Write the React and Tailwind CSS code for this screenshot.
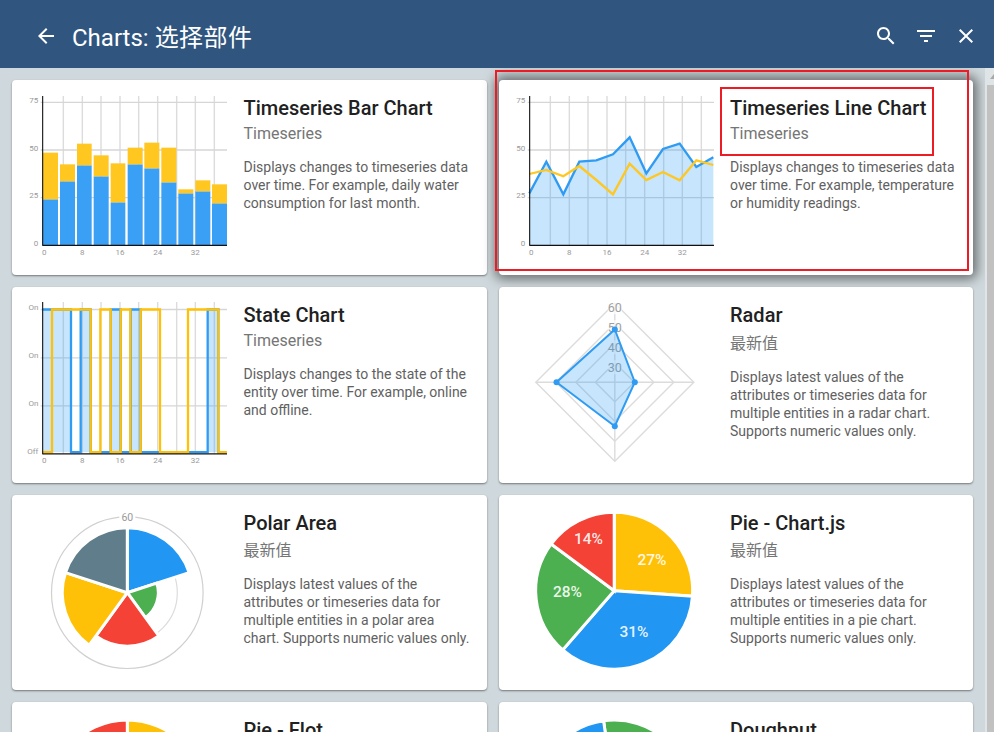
import React from "react";

const BLUE = "#2196f3";
const YELLOW = "#ffc107";
const GREEN = "#4caf50";
const RED = "#f44336";
const SLATE = "#607d8b";
const TICK = "#999999";
const FONT = "Roboto, 'Noto Sans CJK SC', sans-serif";

const VX = [190, 247, 303, 360, 416, 473, 530, 586, 643];
const xb = (z) => z / 3 - 12;
const yb = (z) => z / 3 - 80;

function Axes({ labels, hs, bottom, top }) {
  return (
    <g fontFamily={FONT} fontSize="8" fill={TICK}>
      {VX.map((z) => (
        <line key={z} x1={xb(z)} x2={xb(z)} y1={top} y2={bottom} stroke="#dcdcdc" strokeWidth="1.4" />
      ))}
      {hs.map((y) => (
        <line key={y} x1={xb(122)} x2={xb(681)} y1={y} y2={y} stroke="#d6d6d6" strokeWidth="1.3" />
      ))}
      {labels.map(([t, y]) => (
        <text key={t + y} x={xb(115)} y={y + 2.5} textAnchor="end">
          {t}
        </text>
      ))}
      {[["0", 133], ["8", 247], ["16", 360], ["24", 473], ["32", 586]].map(([t, z]) => (
        <text key={t} x={xb(z)} y={bottom + 9.5} textAnchor="middle">
          {t}
        </text>
      ))}
    </g>
  );
}

function Frame({ bottom, top }) {
  return (
    <g stroke="#111" strokeWidth="1.1">
      <line x1={xb(128)} x2={xb(128)} y1={top} y2={bottom + 0.5} />
      <line x1={xb(128)} x2={xb(681)} y1={bottom} y2={bottom} />
    </g>
  );
}

const Svg = ({ children }) => (
  <svg width="231" height="195" viewBox="0 0 231 195" className="block shrink-0">
    {children}
  </svg>
);

function BarChart() {
  const xs = [[128, 174], [180, 225], [231, 275], [281, 326], [332, 376], [383, 428], [433, 478], [484, 529], [535, 580], [586, 631], [636, 681]];
  const blue = [598, 544, 496, 529, 607, 493, 505, 547, 580, 574, 610];
  const yellow = [458, 493, 431, 466, 490, 443, 428, 443, 568, 541, 553];
  const bottom = yb(736);
  return (
    <Svg>
      <Axes top={16} bottom={bottom} hs={[yb(307), yb(450), yb(593)]} labels={[["75", 20], ["50", 68], ["25", 115.5], ["0", 163]]} />
      {xs.map(([a, b], i) => (
        <g key={a}>
          <rect x={xb(a)} width={(b - a) / 3} y={yb(blue[i])} height={bottom - yb(blue[i])} fill="#39a0f5" />
          <rect x={xb(a)} width={(b - a) / 3} y={yb(yellow[i])} height={yb(blue[i]) - yb(yellow[i])} fill="#ffc720" />
        </g>
      ))}
      <Frame top={16} bottom={bottom} />
    </Svg>
  );
}

function LineChart() {
  const shift = (z) => z + 30;
  const b = [[97, 580], [148, 485], [199, 583], [247, 485], [298, 481], [348, 463], [398, 412], [448, 520], [498, 447], [548, 431], [598, 501], [649, 472]];
  const y = [[97, 522], [148, 510], [199, 529], [247, 498], [298, 540], [348, 583], [398, 491], [448, 540], [498, 516], [548, 541], [598, 481], [649, 495]];
  const bottom = yb(736);
  const pts = (arr) => arr.map(([a, c]) => `${xb(shift(a))},${yb(c)}`).join(" ");
  return (
    <Svg>
      <Axes top={16} bottom={bottom} hs={[yb(307), yb(450), yb(593)]} labels={[["75", 20], ["50", 68], ["25", 115.5], ["0", 163]]} />
      <polygon points={`${xb(128)},${bottom} ${pts(b)} ${xb(679)},${bottom}`} fill={BLUE} fillOpacity="0.25" />
      <polyline points={pts(b)} fill="none" stroke="#2f9bf2" strokeWidth="2.3" />
      <polyline points={pts(y)} fill="none" stroke="#ffc720" strokeWidth="2.3" />
      <Frame top={16} bottom={bottom} />
    </Svg>
  );
}

function StateChart() {
  const yOf = (z) => (z + 855) / 3 - 286.5;
  const on = yOf(72);
  const off = yOf(500);
  const blue = [[128, 213], [242, 272], [332, 362], [392, 422], [623, 655]];
  const yellow = [[156, 272], [301, 332], [362, 391], [422, 480], [564, 655]];
  const path = (segs) => {
    let d = "";
    let last = 128;
    segs.forEach(([a, e], i) => {
      if (i === 0 && a === 128) d += `M${xb(a)} ${on}`;
      else {
        d += `${i === 0 ? "M" : "L"}${xb(last)} ${off}L${xb(a)} ${off}L${xb(a)} ${on}`;
      }
      d += `L${xb(e)} ${on}L${xb(e)} ${off}`;
      last = e;
    });
    return d + `L${xb(681)} ${off}`;
  };
  const bottom = yOf(505);
  return (
    <Svg>
      <Axes top={15} bottom={bottom} hs={[on, yOf(217), yOf(361)]} labels={[["On", yOf(67)], ["On", yOf(211)], ["On", yOf(355)], ["Off", yOf(498)]]} />
      {blue.map(([a, e]) => (
        <rect key={a} x={xb(a)} width={(e - a) / 3} y={on} height={off - on} fill={BLUE} fillOpacity="0.25" />
      ))}
      <path d={path(blue)} fill="none" stroke="#2f9bf2" strokeWidth="2.3" />
      <path d={path(yellow)} fill="none" stroke={YELLOW} strokeWidth="2.3" />
      <Frame top={15} bottom={bottom} />
    </Svg>
  );
}

function RadarChart() {
  const cx = 115.8;
  const cy = 95.2;
  const diamond = (r) => `${cx},${cy - r} ${cx + r},${cy} ${cx},${cy + r} ${cx - r},${cy}`;
  const p = [[cx, cy - 52.7], [cx + 20, cy], [cx, cy + 44], [cx - 58.3, cy]];
  const str = p.map((a) => a.join(",")).join(" ");
  return (
    <Svg>
      {[79, 59, 39, 19.5].map((r) => (
        <polygon key={r} points={diamond(r)} fill="none" stroke="#dcdcdc" strokeWidth="1.4" />
      ))}
      <line x1={cx} x2={cx} y1={cy - 79} y2={cy + 79} stroke="#dcdcdc" strokeWidth="1.4" />
      <line x1={cx - 79} x2={cx + 79} y1={cy} y2={cy} stroke="#dcdcdc" strokeWidth="1.4" />
      {[["60", 75], ["50", 55], ["40", 35], ["30", 15]].map(([t, d]) => (
        <g key={t}>
          <rect x={cx - 7} y={cy - d - 7} width="14" height="14" fill="#fff" fillOpacity="0.7" />
          <text x={cx} y={cy - d + 4.5} textAnchor="middle" fontFamily={FONT} fontSize="12.5" fill="#9e9e9e">
            {t}
          </text>
        </g>
      ))}
      <polygon points={str} fill={BLUE} fillOpacity="0.25" stroke="#2f9bf2" strokeWidth="2" />
      {p.map(([x, y]) => (
        <circle key={x + "-" + y} cx={x} cy={y} r="3" fill="#2f9bf2" />
      ))}
    </Svg>
  );
}

function sector(cx, cy, r, a0, a1) {
  const rad = (a) => ((a - 90) * Math.PI) / 180;
  const x0 = cx + r * Math.cos(rad(a0));
  const y0 = cy + r * Math.sin(rad(a0));
  const x1 = cx + r * Math.cos(rad(a1));
  const y1 = cy + r * Math.sin(rad(a1));
  return `M${cx} ${cy}L${x0} ${y0}A${r} ${r} 0 ${a1 - a0 > 180 ? 1 : 0} 1 ${x1} ${y1}Z`;
}

function PolarChart() {
  const cx = 115.3;
  const cy = 97.7;
  const s = [[0, 72, 65, BLUE], [72, 144, 31, GREEN], [144, 216, 53.5, RED], [216, 288, 65, YELLOW], [288, 360, 65, SLATE]];
  return (
    <Svg>
      <circle cx={cx} cy={cy} r="75.8" fill="none" stroke="#d0d0d0" strokeWidth="1.2" />
      <circle cx={cx} cy={cy} r="50" fill="none" stroke="#dcdcdc" strokeWidth="1.2" />
      {s.map(([a, b, r, c]) => (
        <path key={a} d={sector(cx, cy, r, a, b)} fill={c} stroke="#fff" strokeWidth="3" strokeLinejoin="miter" />
      ))}
      <rect x={cx - 8} y={cy - 83} width="16" height="14" fill="#fff" />
      <text x={cx} y={cy - 72} textAnchor="middle" fontFamily={FONT} fontSize="10.5" fill="#999">
        60
      </text>
    </Svg>
  );
}

function PieChart() {
  const cx = 115.2;
  const cy = 95.7;
  const s = [[0, 94, YELLOW], [94, 221, BLUE], [221, 306.5, GREEN], [306.5, 360, RED]];
  const labels = [["27%", 153, 65], ["31%", 135, 136.7], ["28%", 68.5, 96.7], ["14%", 89.5, 44]];
  return (
    <Svg>
      {s.map(([a, b, c]) => (
        <path key={a} d={sector(cx, cy, 78.5, a, b)} fill={c} stroke="#fff" strokeWidth="3" />
      ))}
      {labels.map(([t, x, y]) => (
        <text key={t} x={x} y={y + 5} textAnchor="middle" fontFamily={FONT} fontWeight="500" fontSize="15.5" fill="#fff" fillOpacity="0.9">
          {t}
        </text>
      ))}
    </Svg>
  );
}

function FlotChart() {
  const cx = 115.3;
  const cy = 95;
  const s = [[0, 97, YELLOW], [97, 208, BLUE], [208, 310, GREEN], [310, 360, RED]];
  return (
    <Svg>
      {s.map(([a, b, c]) => (
        <path key={a} d={sector(cx, cy, 77, a, b)} fill={c} stroke="#fff" strokeWidth="3" />
      ))}
    </Svg>
  );
}

function DoughnutChart() {
  const cx = 115.3;
  const cy = 95;
  const s = [[-8, 100, GREEN], [100, 215, RED], [215, 352, BLUE]];
  return (
    <Svg>
      {s.map(([a, b, c]) => (
        <path key={a} d={sector(cx, cy, 77, a, b)} fill={c} stroke="#fff" strokeWidth="3" />
      ))}
      <circle cx={cx} cy={cy} r="38" fill="#fff" />
    </Svg>
  );
}

function Card({ chart, title, sub, desc, hovered, cjk }) {
  return (
    <div
      className={`flex h-[195.25px] overflow-hidden rounded bg-white ${
        hovered
          ? "shadow-[0_0_12px_4px_rgba(0,0,0,0.5)]"
          : "shadow-[0_1px_2px_rgba(0,0,0,0.45)]"
      }`}
    >
      {chart}
      <div className="min-w-0 flex-1 pr-4 pl-[0.5px] pt-4">
        <div className="text-[20px] leading-6 font-medium text-[#212121]">{title}</div>
        <div className={`mt-[3.5px] text-[16px] text-[#757575] ${cjk ? "pt-[3px] leading-[19px]" : "leading-[normal]"}`}>{sub}</div>
        <div className="mt-[15px] text-[14px] leading-[18px] text-[#616161]">{desc}</div>
      </div>
    </div>
  );
}

const latest = "Displays latest values of the attributes or timeseries data for multiple entities in a";

const Icon = ({ d }) => (
  <svg width="24" height="24" viewBox="0 0 24 24" fill="#fff">
    <path d={d} />
  </svg>
);

const IconBtn = ({ d }) => (
  <button className="flex h-10 w-10 items-center justify-center">
    <Icon d={d} />
  </button>
);

export default function App() {
  return (
    <div className="relative flex h-screen flex-col overflow-hidden bg-[#cfd8dc]" style={{ fontFamily: FONT }}>
      <header className="flex h-[68px] shrink-0 items-center bg-[#305680] pl-[26px] pr-2 pt-1 text-white">
        <IconBtn d="M20 11H7.83l5.59-5.59L12 4l-8 8 8 8 1.41-1.41L7.83 13H20v-2z" />
        <h1 className="ml-1.5 flex-1 pt-1 text-[24px] font-normal">
          Charts: <span className="tracking-[0.5px]">选择部件</span>
        </h1>
        <IconBtn d="M15.5 14h-.79l-.28-.27C15.41 12.59 16 11.11 16 9.5 16 5.91 13.09 3 9.5 3S3 5.91 3 9.5 5.91 16 9.5 16c1.61 0 3.09-.59 4.23-1.57l.27.28v.79l5 4.99L20.49 19l-4.99-5zm-6 0C7.01 14 5 11.99 5 9.5S7.01 5 9.5 5 14 7.01 14 9.5 11.99 14 9.5 14z" />
        <IconBtn d="M10 18h4v-2h-4v2zM3 6v2h18V6H3zm3 7h12v-2H6v2z" />
        <IconBtn d="M19 6.41L17.59 5 12 10.59 6.41 5 5 6.41 10.59 12 5 17.59 6.41 19 12 13.41 17.59 19 19 17.59 13.41 12z" />
      </header>
      <div className="flex min-h-0 flex-1">
        <main className="min-w-0 flex-1 overflow-hidden">
          <div className="grid grid-cols-2 gap-3 p-3">
            <Card chart={<BarChart />} title="Timeseries Bar Chart" sub="Timeseries" desc="Displays changes to timeseries data over time. For example, daily water consumption for last month." />
            <Card hovered chart={<LineChart />} title="Timeseries Line Chart" sub="Timeseries" desc="Displays changes to timeseries data over time. For example, temperature or humidity readings." />
            <Card chart={<StateChart />} title="State Chart" sub="Timeseries" desc="Displays changes to the state of the entity over time. For example, online and offline." />
            <Card cjk chart={<RadarChart />} title="Radar" sub="最新值" desc={`${latest} radar chart. Supports numeric values only.`} />
            <Card cjk chart={<PolarChart />} title="Polar Area" sub="最新值" desc={`${latest} polar area chart. Supports numeric values only.`} />
            <Card cjk chart={<PieChart />} title="Pie - Chart.js" sub="最新值" desc={`${latest} pie chart. Supports numeric values only.`} />
            <Card cjk chart={<FlotChart />} title="Pie - Flot" sub="最新值" desc={`${latest} pie chart. Supports numeric values only.`} />
            <Card cjk chart={<DoughnutChart />} title="Doughnut" sub="最新值" desc={`${latest} doughnut chart. Supports numeric values only.`} />
          </div>
        </main>
        <div className="relative w-[9px] shrink-0 overflow-hidden bg-[#dfe4e6]">
          <div className="absolute left-[2px] right-0 top-[17px] bottom-0 bg-[#c1c1c1]" />
          <div className="absolute left-[5px] top-[6px] h-0 w-0 border-x-[4px] border-b-[5px] border-x-transparent border-b-[#a8a8a8]" />
        </div>
      </div>
      <div className="absolute left-[495px] top-[70px] h-[201px] w-[474px] border-[2.5px] border-[#ed1c24]" />
      <div className="absolute left-[720px] top-[87px] h-[69px] w-[214px] border-[2.5px] border-[#ed1c24]" />
    </div>
  );
}
